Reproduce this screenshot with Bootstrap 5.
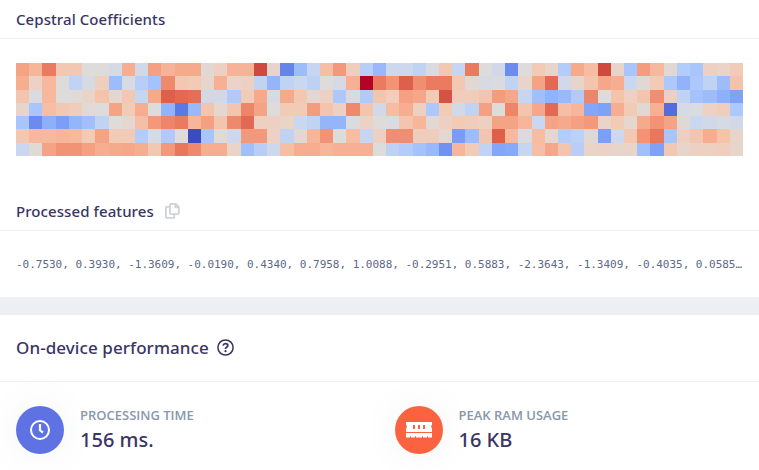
<!DOCTYPE html>
<html lang="en">
<head>
<meta charset="utf-8">
<meta name="viewport" content="width=device-width, initial-scale=1">
<title>Features</title>
<link href="https://cdn.jsdelivr.net/npm/bootstrap@5.3.0/dist/css/bootstrap.min.css" rel="stylesheet">
<style>
body{font-family:"Open Sans",sans-serif;color:#393564;background:#eceff4;line-height:1.5;overflow:hidden}
.panel{background:#fff}
.head,.stat-value{font-family:"Noto Sans","Open Sans",sans-serif;font-weight:500}
.head{border-bottom:1px solid #eff0f2;letter-spacing:.08px}
.head-first{height:39px}
.head-mid{height:39px;margin-top:36px}
.head-perf{height:67px;font-size:17px;padding-bottom:1px}
.head-first,.head-mid{font-size:15px}
.heat-wrap{padding-top:24px}
.heat{display:grid;grid-template-columns:repeat(55,1fr);grid-template-rows:repeat(7,1fr);height:93px}
.values{font:11px/16px "DejaVu Sans Mono",monospace;letter-spacing:-.022px;color:#5c6888;padding:26px 0 24px}
.copy-icon{margin-left:11px}
.perf{margin-top:18px;height:155px}
.stat-icon{width:48px;height:48px;box-shadow:0 0 32px rgba(136,152,170,.1)}
.stats{margin-right:2px}
.bg-time{background:#5e72e4}
.bg-ram{background:#fb6340}
.stat-label{font-size:13px;line-height:19px;font-weight:600;color:#8898aa}
.stat-value{font-size:20px;line-height:29px}
</style>
<script src="https://cdn.jsdelivr.net/npm/bootstrap@5.3.0/dist/js/bootstrap.bundle.min.js"></script>
</head>
<body>
<section class="panel">
  <div class="head head-first px-3 d-flex align-items-center">Cepstral Coefficients</div>
  <div class="heat-wrap px-3"><div class="heat" id="heat"></div></div>
  <div class="head head-mid px-3 d-flex align-items-center">Processed features
    <svg class="copy-icon" width="15" height="16" viewBox="0 0 15 16" fill="none" stroke="#cdd3da" stroke-width="1.8" stroke-linejoin="round"><path d="M5 1.700q0-.8.8-.8h5l3 3v6.400q0 .8-.8.8H5.800q-.8 0-.8-.8zM10.300 1v3.400h3.400M4.700 3.900H1.700q-.8 0-.8.8v9.300q0 .8.8.8h6.800q.8 0 .8-.8v-2.500"/></svg>
  </div>
  <div class="px-3"><div class="values text-truncate">-0.7530, 0.3930, -1.3609, -0.0190, 0.4340, 0.7958, 1.0088, -0.2951, 0.5883, -2.3643, -1.3409, -0.4035, 0.0585, 0.2117, -0.6402</div></div>
</section>
<section class="panel perf">
  <div class="head head-perf px-3 d-flex align-items-center gap-2">On-device performance
    <svg width="17" height="17" viewBox="0 0 17 17" fill="none" stroke="#393564"><circle cx="8.5" cy="8.5" r="7.600" stroke-width="1.5"/><path d="M6.100 6.600Q6.500 4.700 8.500 4.700q2.300 0 2.300 1.900 0 1.100-1.200 1.700-1.100.6-1.100 1.600" stroke-width="1.8"/><circle cx="8.5" cy="12.2" r="1.1" fill="#393564" stroke="none"/></svg>
  </div>
  <div class="stats"><div class="row g-0 pt-4">
    <div class="col-6 px-3 d-flex gap-3">
      <div class="stat-icon bg-time rounded-circle d-flex align-items-center justify-content-center">
        <svg width="20" height="20" viewBox="0 0 20 20" fill="none" stroke="#fff" stroke-width="2"><circle cx="10" cy="10" r="9"/><path d="M10 4v6.300l3 2.200" stroke-width="2.2"/></svg>
      </div>
      <div><div class="stat-label">PROCESSING TIME</div><div class="stat-value">156 ms.</div></div>
    </div>
    <div class="col-6 px-3 d-flex gap-3">
      <div class="stat-icon bg-ram rounded-circle d-flex align-items-center justify-content-center">
        <svg width="26" height="16" viewBox="0 0 26 16" fill="#fff"><path fill-rule="evenodd" d="M0 0h26v3q-1 .5-1 1.500T26 6v4H0V6q1-.5 1-1.500T0 3zM7 3v4h2V3zM12 3v4h2V3zM17 3v4h2V3zM0 11h26v4.500H0zM4 14.200v1.300h1v-1.300zM9 14.200v1.300h1v-1.300zM16 14.200v1.300h1v-1.300zM21 14.200v1.300h1v-1.300z"/></svg>
      </div>
      <div><div class="stat-label">PEAK RAM USAGE</div><div class="stat-value">16 KB</div></div>
    </div>
  </div></div>
</section>
<script>
// Normalised coefficients (percent of range), one array per band
const bands = [
[73,67,82,61,61,50,50,48,70,47,74,68,71,71,52,57,68,68,93,54,17,34,44,64,76,58,41,33,46,46,43,49,61,44,82,50,47,19,50,60,54,40,71,65,93,54,37,75,66,52,40,37,57,55,60],
[70,56,66,50,43,48,58,34,48,41,36,79,61,60,54,69,55,57,43,32,43,45,42,50,48,69,100,82,77,88,78,82,82,61,52,48,49,43,54,73,86,47,54,62,72,70,45,52,60,38,31,38,43,34,63],
[62,49,66,50,51,55,63,53,61,44,71,88,86,85,47,47,39,60,71,48,71,61,53,57,38,48,39,62,58,74,72,60,91,59,59,62,75,72,44,35,31,33,39,80,50,63,57,62,78,57,43,36,34,30,26],
[54,37,64,61,59,51,50,73,60,70,50,31,13,33,62,53,62,80,73,50,60,60,75,62,57,79,62,47,65,70,57,38,60,47,43,74,50,80,62,72,86,64,67,27,26,70,60,52,69,10,48,49,56,58,38],
[37,19,30,25,32,35,43,50,53,64,76,80,82,67,74,62,79,86,57,57,55,45,43,32,32,49,56,50,49,62,67,52,57,60,59,57,73,73,67,45,73,71,74,76,55,60,53,71,77,73,52,45,47,48,47],
[61,66,66,67,66,60,73,60,60,40,48,39,50,0,37,51,46,76,76,56,43,52,67,77,50,65,44,57,78,78,59,59,53,24,34,62,88,66,49,65,53,40,42,52,25,46,61,77,83,37,57,62,70,63,54],
[45,51,73,77,77,74,70,71,72,70,61,76,83,79,70,70,55,35,41,46,64,70,70,67,69,69,69,50,42,40,36,33,21,67,60,43,27,28,44,64,72,62,41,55,56,54,55,35,26,61,54,57,57,58,54]
];
// Diverging blue-to-red colour stops
const stops = [[0,59,76,192],[12.5,89,119,227],[25,123,159,249],[37.5,170,199,253],[45,201,215,240],[50,221,220,219],[55,234,211,199],[60,242,203,183],[65,247,188,161],[70,247,173,144],[75,244,157,126],[80,238,132,104],[87,224,101,79],[93,207,73,62],[100,180,4,38]];
function tone(v){
  let i = 1;
  while (i < stops.length - 1 && v > stops[i][0]) i++;
  const a = stops[i-1], b = stops[i], t = (v-a[0])/(b[0]-a[0]);
  return 'rgb(' + [1,2,3].map(k => Math.round(a[k]+(b[k]-a[k])*t)).join(',') + ')';
}
const heat = document.getElementById('heat');
bands.flat().forEach(v => {
  const cell = document.createElement('div');
  cell.style.backgroundColor = tone(v);
  heat.append(cell);
});
</script>
</body>
</html>
